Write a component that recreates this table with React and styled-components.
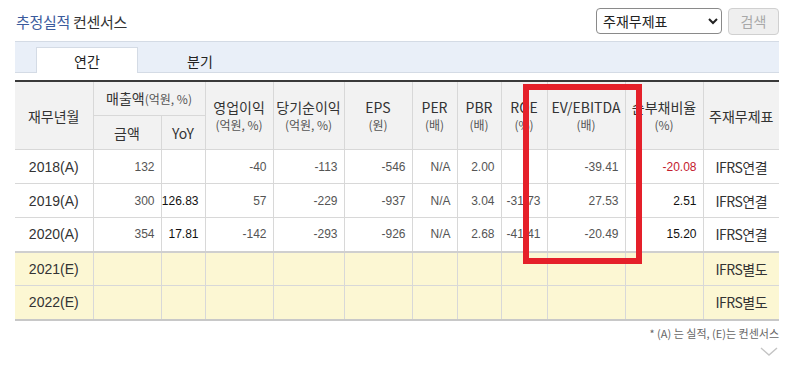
import styled, { createGlobalStyle } from "styled-components"

const GlobalStyle = createGlobalStyle`
body {
  margin: 0;
  background: #ffffff;
  font-family: "Liberation Sans", "Noto Sans CJK KR", sans-serif;
  color: #333333;
}
`

const rows = [
  { year: "2018(A)", sales: "132", yoy: "", op: "-40", net: "-113", eps: "-546", per: "N/A", pbr: "2.00", roe: "", ev: "-39.41", debt: "-20.08", neg: true, std: "IFRS연결" },
  { year: "2019(A)", sales: "300", yoy: "126.83", op: "57", net: "-229", eps: "-937", per: "N/A", pbr: "3.04", roe: "-31.73", ev: "27.53", debt: "2.51", std: "IFRS연결" },
  { year: "2020(A)", sales: "354", yoy: "17.81", op: "-142", net: "-293", eps: "-926", per: "N/A", pbr: "2.68", roe: "-41.41", ev: "-20.49", debt: "15.20", std: "IFRS연결" },
  { year: "2021(E)", est: true, std: "IFRS별도" },
  { year: "2022(E)", est: true, std: "IFRS별도" },
]

const widths = [78, 68, 44, 68, 71, 68, 45, 44, 46, 78, 78, 76]

export default function App() {
  return (
    <>
      <GlobalStyle />
      <Page>
        <TopBar>
          <Title>
            <em>추정실적</em> 컨센서스
          </Title>
          <Controls>
            <Select defaultValue="main">
              <option value="main">주재무제표</option>
            </Select>
            <SearchButton disabled>검색</SearchButton>
          </Controls>
        </TopBar>

        <TabBar>
          <Tab active>연간</Tab>
          <Tab>분기</Tab>
        </TabBar>

        <TableWrap>
          <Table>
            <colgroup>
              {widths.map((w, i) => (
                <col key={i} style={{ width: w }} />
              ))}
            </colgroup>
            <thead>
              <tr>
                <Th rowSpan={2}>재무년월</Th>
                <Th colSpan={2}>
                  매출액<Small>(억원, %)</Small>
                </Th>
                <Th rowSpan={2}>
                  영업이익<Sub>(억원, %)</Sub>
                </Th>
                <Th rowSpan={2}>
                  당기순이익<Sub>(억원, %)</Sub>
                </Th>
                <Th rowSpan={2}>
                  EPS<Sub>(원)</Sub>
                </Th>
                <Th rowSpan={2}>
                  PER<Sub>(배)</Sub>
                </Th>
                <Th rowSpan={2}>
                  PBR<Sub>(배)</Sub>
                </Th>
                <Th rowSpan={2}>
                  ROE<Sub>(%)</Sub>
                </Th>
                <Th rowSpan={2}>
                  EV/EBITDA<Sub>(배)</Sub>
                </Th>
                <Th rowSpan={2}>
                  순부채비율<Sub>(%)</Sub>
                </Th>
                <Th rowSpan={2}>주재무제표</Th>
              </tr>
              <tr>
                <Th>금액</Th>
                <Th>YoY</Th>
              </tr>
            </thead>
            <tbody>
              {rows.map((r, i) => (
                <Row key={r.year} est={r.est} first={r.est && !rows[i - 1].est}>
                  <Year>{r.year}</Year>
                  <Num>{r.sales}</Num>
                  <Num strong>{r.yoy}</Num>
                  <Num>{r.op}</Num>
                  <Num>{r.net}</Num>
                  <Num>{r.eps}</Num>
                  <Num>{r.per}</Num>
                  <Num>{r.pbr}</Num>
                  <Num>{r.roe}</Num>
                  <Num>{r.ev}</Num>
                  <Num strong red={r.neg}>{r.debt}</Num>
                  <Std>{r.std}</Std>
                </Row>
              ))}
            </tbody>
          </Table>
          <Highlight />
        </TableWrap>

        <Note>* (A) 는 실적, (E)는 컨센서스</Note>
        <More>
          <svg width="18" height="10" viewBox="0 0 18 10">
            <path d="M1 1 L9 8 L17 1" fill="none" stroke="#c4c4c4" strokeWidth="1.4" />
          </svg>
        </More>
      </Page>
    </>
  )
}

const Page = styled.div`
width: 764px;
padding: 0 11px 0 15px;
`

const TopBar = styled.div`
height: 41px;
display: flex;
justify-content: space-between;
align-items: center;
padding-top: 2px;
box-sizing: border-box;
`

const Title = styled.h2`
margin: 0 0 0 1px;
font-family: "Noto Sans CJK KR", sans-serif;
font-size: 15px;
font-weight: 400;
color: #333333;
letter-spacing: -0.3px;
em {
  font-style: normal;
  color: #3b5b9d;
}
`

const Controls = styled.div`
display: flex;
gap: 6px;
align-items: center;
margin-bottom: 1px;
`

const Select = styled.select`
width: 126px;
height: 26px;
border: 1px solid #8a8a8a;
border-radius: 4px;
background: #ffffff;
font-family: "Noto Sans CJK KR", sans-serif;
font-size: 14px;
color: #222222;
padding: 0 2px;
`

const SearchButton = styled.button`
width: 51px;
height: 27px;
border: 1px solid #d0d0d0;
border-radius: 4px;
background: #efefef;
color: #a8a8a8;
font-family: "Noto Sans CJK KR", sans-serif;
font-size: 14px;
`

const TabBar = styled.div`
height: 32px;
box-sizing: border-box;
background: #e9eff8;
border-top: 1px solid #d4dbe5;
border-bottom: 1px solid #d4dbe5;
display: flex;
align-items: flex-end;
padding-left: 21px;
gap: 11px;
`

const Tab = styled.div`
width: 102px;
height: 26px;
box-sizing: border-box;
margin-bottom: -1px;
display: flex;
align-items: center;
justify-content: center;
font-family: "Noto Sans CJK KR", sans-serif;
font-size: 14px;
color: #222222;
background: ${(p) => (p.active ? "#ffffff" : "transparent")};
border: 1px solid ${(p) => (p.active ? "#d4dbe5" : "transparent")};
border-bottom: none;
`

const TableWrap = styled.div`
position: relative;
margin-top: 7px;
`

const Table = styled.table`
width: 764px;
table-layout: fixed;
border-collapse: collapse;
border-top: 2px solid #3a3a3a;
border-bottom: 2px solid #c8c8c8;
font-size: 13px;
`

const Th = styled.th`
height: 33px;
padding: 0;
background: #f2f2f2;
border: 1px solid #d8d8d8;
font-family: "Noto Sans CJK KR", sans-serif;
font-weight: 400;
font-size: 14px;
line-height: 18px;
color: #333333;
white-space: nowrap;
&:first-child { border-left: none; }
&:last-child { border-right: none; }
tr:last-child > &:first-child { border-left: 1px solid #d8d8d8; }
tr:last-child > &:last-child { border-right: 1px solid #d8d8d8; }
`

const Small = styled.span`
font-size: 12px;
color: #555555;
`

const Sub = styled.span`
display: block;
font-size: 12px;
color: #555555;
`

const Row = styled.tr`
background: ${(p) => (p.est ? "#fcf7d3" : "#ffffff")};
td {
  height: 34px;
  padding-top: 0;
  padding-bottom: 0;
  line-height: 18px;
  box-sizing: border-box;
  border-top: ${(p) => (p.first ? "2px solid #cfcfcf" : "1px solid #d8d8d8")};
  border-bottom: 1px solid #d8d8d8;
  border-left: 1px solid #d8d8d8;
  border-right: 1px solid #d8d8d8;
}
td:first-child { border-left: none; }
td:last-child { border-right: none; }
`

const Year = styled.td`
text-align: center;
font-size: 14px;
color: #333333;
`

const Num = styled.td`
text-align: right;
padding: 0 6px 0 0;
font-family: "Liberation Sans", sans-serif;
font-size: 12px;
color: ${(p) => (p.red ? "#c4202e" : p.strong ? "#111111" : "#555555")};
white-space: nowrap;
`

const Std = styled.td`
text-align: center;
font-family: "Noto Sans CJK KR", sans-serif;
font-size: 14px;
color: #333333;
letter-spacing: -0.5px;
`

const Highlight = styled.div`
position: absolute;
left: 508px;
top: 4px;
width: 119px;
height: 180px;
box-sizing: border-box;
border: 6px solid #e5202a;
pointer-events: none;
`

const Note = styled.div`
margin-top: 4px;
text-align: right;
font-family: "Noto Sans CJK KR", sans-serif;
font-size: 11px;
color: #666666;
`

const More = styled.div`
display: flex;
justify-content: flex-end;
margin-top: 6px;
padding-right: 1px;
`
